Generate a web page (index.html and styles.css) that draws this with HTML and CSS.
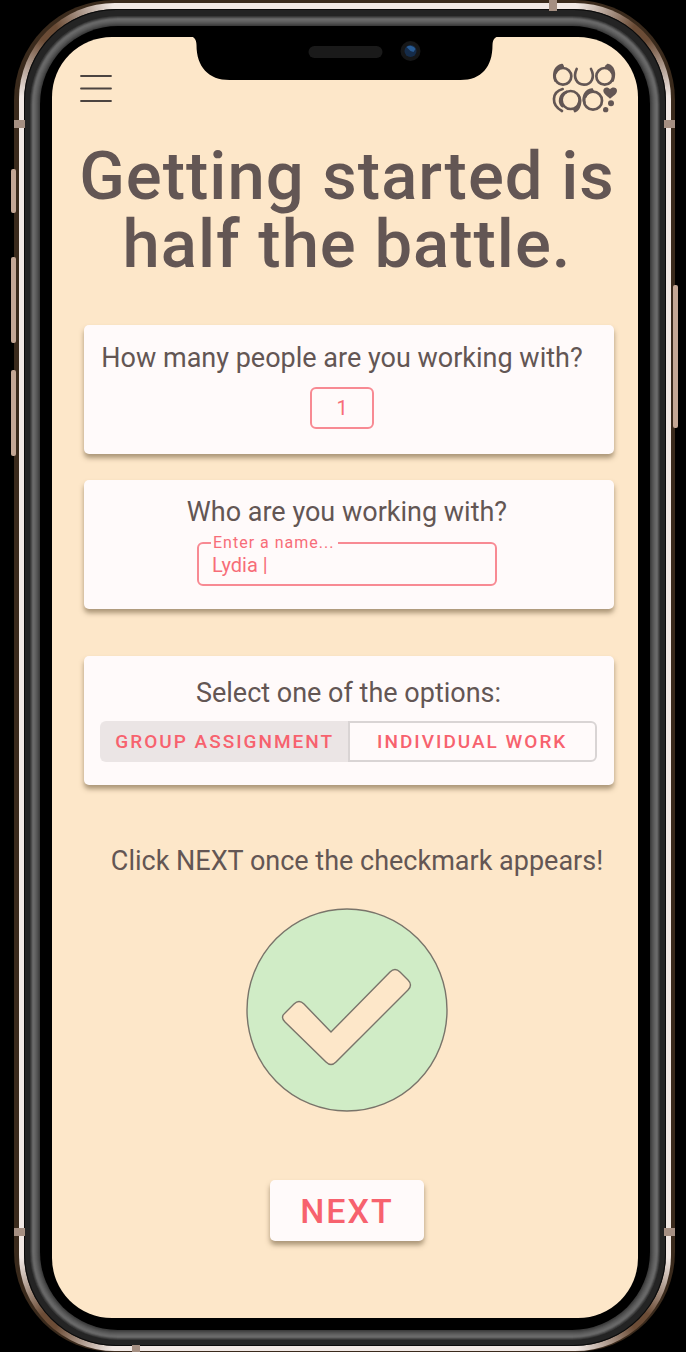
FILE: index.html
```html
<!DOCTYPE html>
<html lang="en">
<head>
<meta charset="utf-8">
<meta name="viewport" content="width=device-width, initial-scale=1">
<title>Getting started</title>
<link rel="stylesheet" href="styles.css">
</head>
<body>
<div class="phone">
  <span class="side-key side-key-mute"></span>
  <span class="side-key side-key-up"></span>
  <span class="side-key side-key-down"></span>
  <span class="side-key side-key-power"></span>
  <div class="rim">
    <div class="bezel">
      <div class="glass">
        <div class="screen">
          <svg class="notch" viewBox="0 0 313 44" aria-hidden="true">
            <path d="M0 0H313C307 0 304 3 304 9C304 31 293 44 272 44H41C20 44 8 31 8 9C8 3 5 0 0 0Z" fill="#000"/>
            <rect x="120" y="10" width="74" height="12" rx="6" fill="#1a1a1a"/>
            <circle cx="222" cy="15" r="10" fill="#161718"/>
            <circle cx="222" cy="15" r="6" fill="#152c4a"/>
            <path d="M222 15L218 11A6 6 0 0 1 227 13L225 16Z" fill="#285b93"/>
          </svg>
          <header class="topbar">
            <button class="menu" type="button" aria-label="Menu">
              <svg viewBox="0 0 32 28" width="32" height="28" aria-hidden="true"><path d="M1 2H31M1 14.5H31M1 27H31" stroke="#4c4440" stroke-width="1.8" stroke-linecap="round"/></svg>
            </button>
            <a class="logo" href="#" aria-label="Home">
              <svg viewBox="36 39 198 150" width="66" height="50" fill="none" stroke="#635654" stroke-width="8" stroke-linecap="round" aria-hidden="true">
                <circle cx="69" cy="79" r="25"/>
                <path d="M46 92C38 70 46 49 66 45M47 68C51 57 58 51 68 49"/>
                <path d="M110 57C98 82 110 104 132 104C154 104 166 82 153 57"/>
                <circle cx="194" cy="79" r="25"/>
                <path d="M203 45C220 49 226 70 218 92M199 49C208 52 214 59 217 68"/>
                <path d="M68 117C35 126 32 165 66 183"/>
                <circle cx="92" cy="150" r="27"/>
                <path d="M79 126C58 134 56 158 67 168M116 137C126 154 117 178 105 183M118 155C116 167 111 175 103 179"/>
                <circle cx="159" cy="152" r="27"/>
                <path d="M133 158C127 138 138 121 156 119M136 140C141 129 148 125 158 123"/>
                <g fill="#635654" stroke="none">
                  <path d="M210 146C200 137 189 130 190 121C191 111 204 109 210 118C216 109 231 111 231 122C231 131 220 138 210 146Z"/>
                  <circle cx="213" cy="160" r="9"/>
                  <circle cx="197" cy="179" r="8"/>
                </g>
              </svg>
            </a>
          </header>
          <main class="content">
            <h1 class="title">Getting started is<br>half the battle.</h1>
            <section class="card card-count">
              <label class="question" for="count">How many people are you working with?</label>
              <input class="count" id="count" type="text" inputmode="numeric" value="1">
            </section>
            <section class="card card-name">
              <h2 class="question">Who are you working with?</h2>
              <fieldset class="field">
                <legend class="field-legend"><label for="name">Enter a name...</label></legend>
                <input class="field-input" id="name" type="text" value="Lydia |">
              </fieldset>
            </section>
            <section class="card card-options">
              <h2 class="question">Select one of the options:</h2>
              <div class="segments">
                <button class="segment segment-on" type="button" aria-pressed="true">GROUP ASSIGNMENT</button>
                <button class="segment" type="button" aria-pressed="false">INDIVIDUAL WORK</button>
              </div>
            </section>
            <p class="hint">Click NEXT once the checkmark appears!</p>
            <svg class="check" viewBox="0 0 202 204" role="img" aria-label="Done">
              <ellipse cx="101" cy="102" rx="100" ry="101" fill="#d0ecc6" stroke="#79746a" stroke-width="1.4"/>
              <path d="M39 105L48 96Q53 91 58 96L85 124L144 64Q149 59 154 64L162 72Q167 77 162 82L90 154Q85 159 80 154L39 114Q34 109 39 105Z" fill="#fde7c9" stroke="#79746a" stroke-width="1.4"/>
            </svg>
            <button class="next" type="button">NEXT</button>
          </main>
        </div>
      </div>
    </div>
    <span class="band band-left band-high"></span>
    <span class="band band-right band-high"></span>
    <span class="band band-left band-low"></span>
    <span class="band band-right band-low"></span>
    <span class="band band-top"></span>
    <span class="band band-bottom"></span>
  </div>
</div>
</body>
</html>
```

FILE: styles.css
```css
* {
  box-sizing: border-box;
}

body {
  margin: 0;
  background: #000;
  color: #635654;
  font-family: Roboto, "Liberation Sans", sans-serif;
}

button,
input {
  font-family: inherit;
}

.phone {
  position: relative;
  display: flex;
  min-height: 100vh;
  margin: 0 11px 0 14px;
  padding: 3px 4px 1px 5px;
  border-radius: 100px;
  background: #3a2a1c;
}

.rim {
  position: relative;
  display: flex;
  flex: 1;
  min-width: 0;
  padding: 6px 5px 5px;
  border-radius: 96px;
  background:
    radial-gradient(circle at 28px 28px, #6b4c36 10px, transparent 70px),
    radial-gradient(circle at calc(100% - 28px) 28px, #6b4c36 10px, transparent 70px),
    radial-gradient(circle at 28px calc(100% - 28px), #6b4c36 10px, transparent 70px),
    radial-gradient(circle at calc(100% - 28px) calc(100% - 28px), #6b4c36 10px, transparent 70px),
    #f1e8e4;
}

.bezel {
  display: flex;
  flex: 1;
  min-width: 0;
  padding: 17px 16px 16px;
  border-radius: 92px;
  background: #242424;
  box-shadow: inset 0 0 0 1px #0a0a0a;
}

.glass {
  display: flex;
  flex: 1;
  min-width: 0;
  padding: 11px 12px 12px;
  border-radius: 78px;
  background: #000;
  box-shadow:
    0 0 0 1px #3c3c3c,
    0 0 0 2px #464646,
    0 0 0 3px #505050,
    0 0 0 4px #585858,
    0 0 0 5px #606060,
    0 0 0 6px #666,
    0 0 0 7px #6a6a6a,
    0 0 0 8px #626262,
    0 0 0 9px #4c4c4c,
    0 0 0 10px #383838;
}

.screen {
  position: relative;
  flex: 1;
  min-width: 0;
  border-radius: 60px;
  background: #fde7c9;
}

.notch {
  position: absolute;
  top: -1px;
  left: 50%;
  width: 313px;
  height: 44px;
  transform: translateX(-50%);
}

.side-key {
  position: absolute;
  left: -3px;
  width: 5px;
  border-radius: 2px;
  background: #c4a795;
}

.side-key-mute {
  top: 169px;
  height: 44px;
}

.side-key-up {
  top: 257px;
  height: 86px;
}

.side-key-down {
  top: 370px;
  height: 86px;
}

.side-key-power {
  top: 285px;
  right: -3px;
  left: auto;
  height: 143px;
}

.band {
  position: absolute;
  width: 11px;
  height: 8px;
  background: #a58f82;
}

.band-left {
  left: -5px;
}

.band-right {
  right: -4px;
}

.band-high {
  top: 117px;
}

.band-low {
  bottom: 115px;
}

.band-top {
  top: -3px;
  right: 114px;
  width: 8px;
  height: 11px;
}

.band-bottom {
  bottom: -1px;
  left: 113px;
  width: 8px;
  height: 7px;
}

.topbar {
  display: flex;
  align-items: center;
  justify-content: space-between;
  padding: 26px 20px 0 28px;
}

.menu {
  display: flex;
  padding: 0;
  border: 0;
  background: none;
}

.logo {
  display: flex;
}

.content {
  display: flex;
  flex-direction: column;
  align-items: center;
  padding: 29px 24px 77px 28px;
}

.title {
  margin: 0 0 47px;
  font-size: 67px;
  font-weight: 500;
  line-height: 68px;
  letter-spacing: 1px;
  text-align: center;
  white-space: nowrap;
}

.card {
  display: flex;
  flex-direction: column;
  align-items: center;
  align-self: stretch;
  min-height: 129px;
  margin-left: 4px;
  padding: 16px 20px 16px 16px;
  border-radius: 5px;
  background: #fffafa;
  box-shadow: 0 4px 5px rgba(90, 70, 40, 0.5);
}

.card-count {
  margin-bottom: 26px;
  padding: 17px 30px 16px 16px;
}

.card-name {
  margin-bottom: 47px;
}

.card-options {
  padding: 21px 17px 16px 16px;
}

.question,
.hint {
  margin: 0;
  font-size: 27px;
  font-weight: 400;
  line-height: 32px;
  white-space: nowrap;
}

.count {
  width: 64px;
  height: 42px;
  margin-top: 13px;
  padding: 0;
  border: 2px solid #f88a93;
  border-radius: 6px;
  background: none;
  color: #f76d78;
  font-size: 20px;
  text-align: center;
}

.field {
  width: 300px;
  margin: 5px 0 0;
  padding: 0 12px 7px;
  border: 2px solid #f88a93;
  border-radius: 6px;
}

.field-legend {
  padding: 0 4px 0 2px;
  color: #f76d78;
  font-size: 16px;
  line-height: 20px;
  letter-spacing: 1px;
}

.field-input {
  display: block;
  width: 100%;
  height: 24px;
  padding: 0 1px;
  border: 0;
  outline: 0;
  background: none;
  color: #f76d78;
  font-size: 20px;
}

.segments {
  display: flex;
  align-self: stretch;
  margin-top: 12px;
}

.segment {
  flex: 1;
  height: 41px;
  padding: 0;
  border: 2px solid #d9d4d4;
  border-radius: 0 6px 6px 0;
  background: none;
  color: #f7626e;
  font-size: 19px;
  font-weight: 500;
  letter-spacing: 2px;
  white-space: nowrap;
}

.segment-on {
  border-color: #ebe5e5;
  border-right: 0;
  border-radius: 6px 0 0 6px;
  background: #ebe5e5;
}

.hint {
  margin: 60px 0 31px 20px;
}

.check {
  width: 202px;
  height: 204px;
}

.next {
  height: 61px;
  margin-top: 68px;
  padding: 0 30px;
  border: 0;
  border-radius: 5px;
  background: #fffafa;
  box-shadow: 0 4px 5px rgba(90, 70, 40, 0.5);
  color: #f7626e;
  font-size: 34px;
  font-weight: 500;
  letter-spacing: 2px;
}
```
